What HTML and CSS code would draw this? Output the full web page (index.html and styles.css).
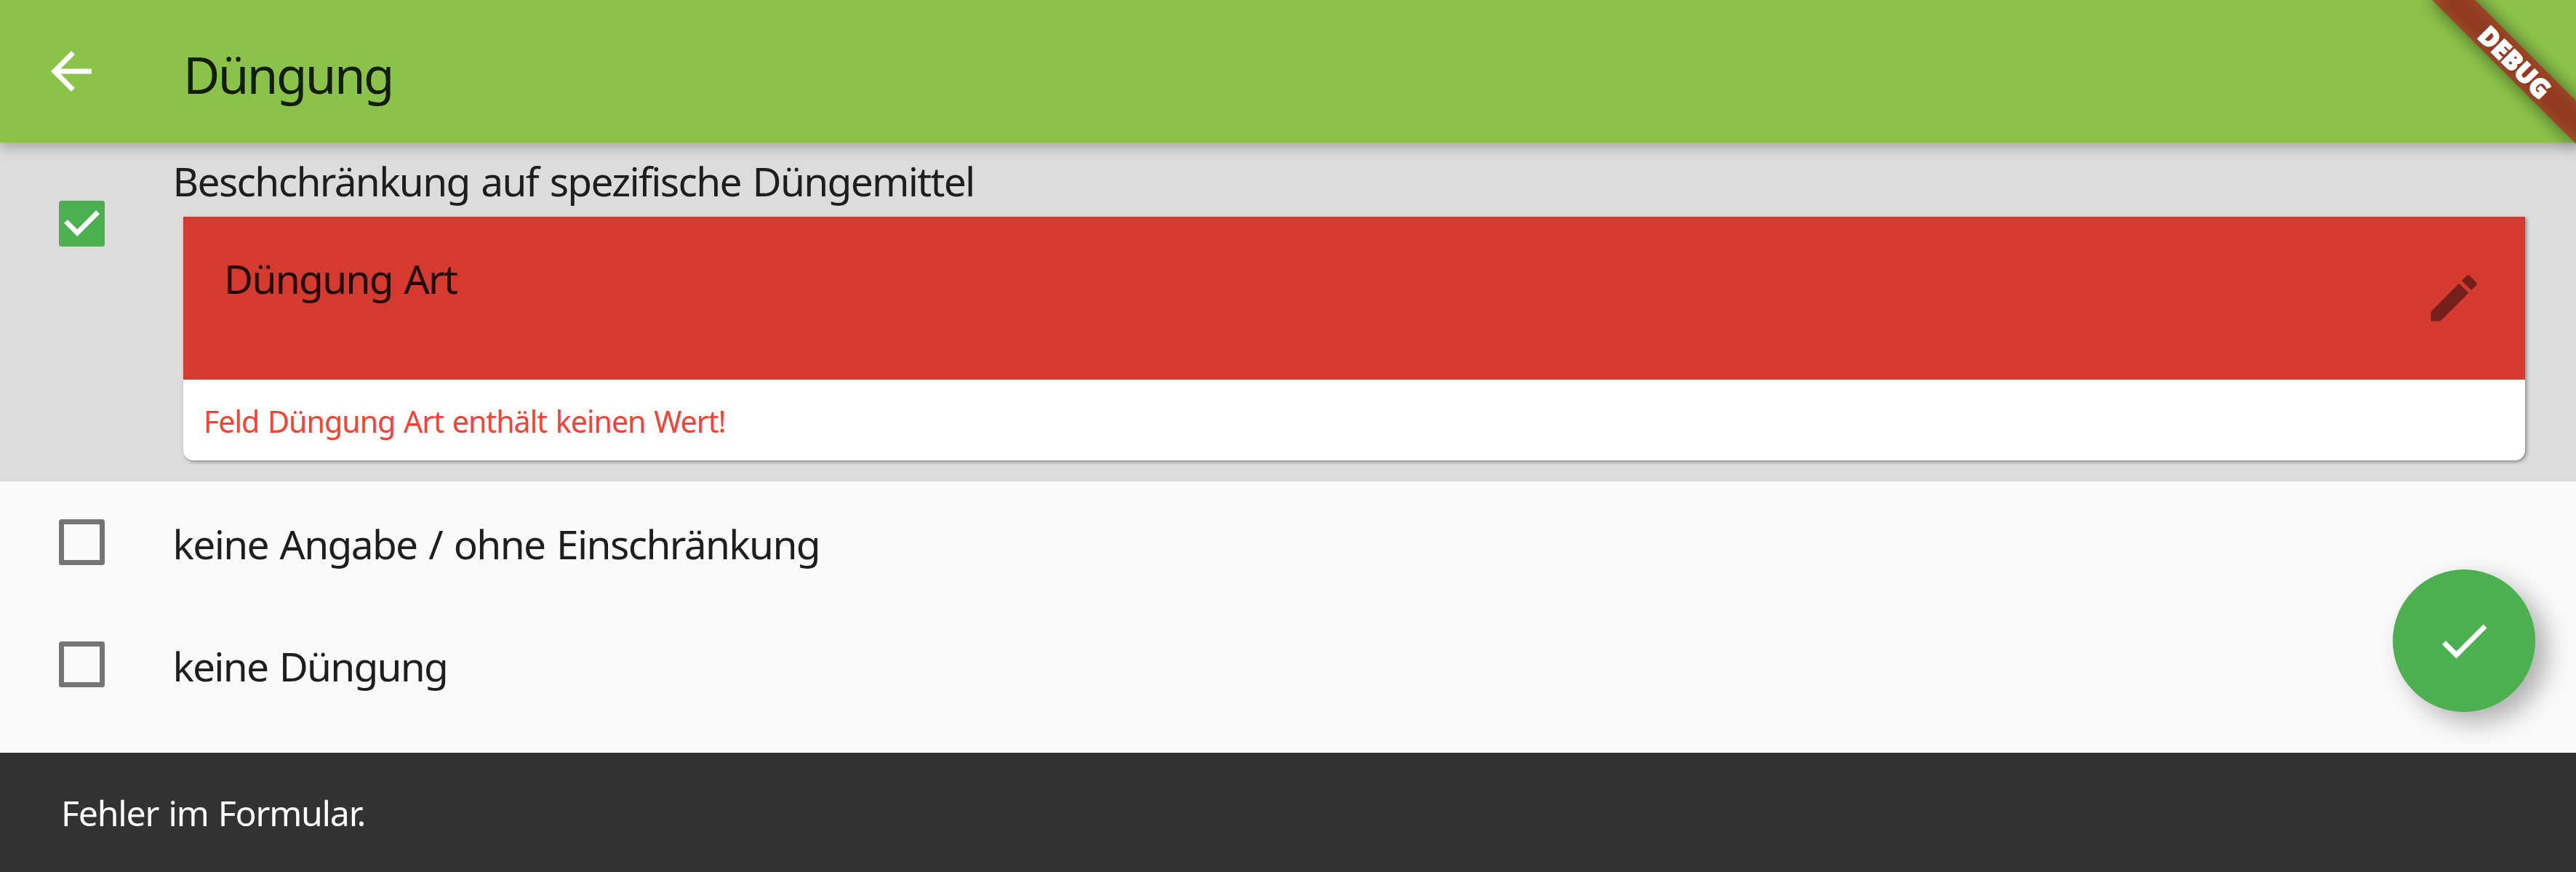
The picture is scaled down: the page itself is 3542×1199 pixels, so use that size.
FILE: index.html
```html
<!DOCTYPE html>
<html lang="de">
<head>
<meta charset="utf-8">
<title>Düngung</title>
<link rel="stylesheet" href="styles.css">
</head>
<body>
<div class="screen">
  <header class="app-bar">
    <svg class="icon back" viewBox="0 0 24 24"><path d="M20 11H7.83l5.59-5.59L12 4l-8 8 8 8 1.41-1.41L7.83 13H20v-2z"/></svg>
    <h1 class="title">Düngung</h1>
    <div class="banner"><span class="banner-text">DEBUG</span></div>
  </header>
  <main class="list">
    <section class="row row-selected">
      <svg class="checkbox checked" viewBox="0 0 18 18"><rect width="18" height="18" rx="1"/><path d="M2.7 8.1 7.2 12.6 15.3 4.5"/></svg>
      <div class="content">
        <div class="label label-restrict">Beschchränkung auf spezifische Düngemittel</div>
        <div class="card">
          <div class="card-head">
            <span class="label label-kind">Düngung Art</span>
            <svg class="icon edit" viewBox="0 0 24 24"><path d="M3 17.25V21h3.75L17.81 9.94l-3.75-3.75L3 17.25zM20.71 7.04c.39-.39.39-1.02 0-1.41l-2.34-2.34c-.39-.39-1.02-.39-1.41 0l-1.83 1.83 3.75 3.75 1.83-1.83z"/></svg>
          </div>
          <div class="card-error">Feld Düngung Art enthält keinen Wert!</div>
        </div>
      </div>
    </section>
    <section class="row">
      <span class="checkbox empty"></span>
      <span class="label label-any">keine Angabe / ohne Einschränkung</span>
    </section>
    <section class="row">
      <span class="checkbox empty"></span>
      <span class="label label-none">keine Düngung</span>
    </section>
    <button class="fab"><svg class="icon" viewBox="0 0 24 24"><path d="M9 16.17L4.83 12l-1.42 1.41L9 19 21 7l-1.41-1.41z"/></svg></button>
  </main>
  <footer class="snackbar">Fehler im Formular.</footer>
</div>
</body>
</html>
```
FILE: styles.css
```css
* { box-sizing: border-box; }

body {
  margin: 0;
  font-family: "Noto Sans", "Open Sans", sans-serif;
  color: #1e1e1e;
  background: #fafafa;
}

.screen {
  display: flex;
  flex-direction: column;
  height: 1199px;
  overflow: hidden;
}

.icon {
  width: 84px;
  height: 84px;
  flex: none;
  fill: currentColor;
}

/* App bar */
.app-bar {
  position: relative;
  z-index: 1;
  flex: none;
  display: flex;
  align-items: center;
  height: 196px;
  padding-left: 56px;
  background: #8bc34a;
  box-shadow: 0 6px 16px rgba(0, 0, 0, .26);
}

.back { color: #fff; }

.title {
  margin: 7px 0 0 112px;
  font-size: 69px;
  font-weight: 400;
  line-height: 94px;
  letter-spacing: -2.57px;
  color: #141c0a;
}

/* Diagonal corner ribbon */
.banner {
  position: absolute;
  top: 98px;
  right: -140px;
  width: 280px;
  height: 42px;
  transform-origin: 140px -98px;
  transform: rotate(45deg);
  display: flex;
  align-items: center;
  justify-content: center;
}

.banner::before,
.banner::after {
  content: "";
  position: absolute;
  inset: 0;
}

.banner::before {
  background: rgba(0, 0, 0, .5);
  filter: blur(13px);
}

.banner::after { background: rgba(183, 28, 28, .627); }

.banner-text {
  position: relative;
  z-index: 1;
  padding-left: 2px;
  font-size: 35.7px;
  font-weight: 900;
  line-height: 42px;
  color: #fff;
  -webkit-text-stroke: 1.4px #fff;
}

/* Options */
.list {
  position: relative;
  flex: none;
  height: 838.5px;
}

.row {
  display: flex;
  align-items: center;
  height: 168px;
  padding-left: 80.5px;
}

.row-selected {
  align-items: flex-start;
  height: 465.5px;
  background: #dcdcdc;
}

.checkbox {
  flex: none;
  width: 63px;
  height: 63px;
  margin-right: 94px;
}

.checked {
  margin-top: 80px;
  fill: #4caf50;
}

.checked path {
  fill: none;
  stroke: #fff;
  stroke-width: 2;
}

.empty {
  border: 7px solid #757575;
  border-radius: 3.5px;
}

.label {
  font-size: 55px;
  line-height: 74px;
  word-spacing: 3px;
  white-space: nowrap;
}

.label-restrict { letter-spacing: -1.67px; }
.label-kind { letter-spacing: -1.69px; }
.label-any { margin-top: 4px; letter-spacing: -1.63px; }
.label-none { margin-top: 4px; letter-spacing: -1.78px; }

.content {
  flex: 1;
  padding: 16px 70px 0 0;
}

/* Card holding the missing value and its message */
.card {
  height: 335.5px;
  margin: 11.5px 0 0 14.5px;
  background: #fff;
  border-radius: 0 0 14px 14px;
  box-shadow: 2px 2px 5px rgba(0, 0, 0, .38);
}

.card-head {
  display: flex;
  justify-content: space-between;
  align-items: flex-start;
  height: 224px;
  padding: 48px 56px 0;
  background: #d53a2f;
  color: #1f0604;
}

.edit {
  margin-top: 22px;
  color: #741f1b;
}

.card-error {
  padding: 29px 28px 0;
  font-size: 41.2px;
  line-height: 56px;
  letter-spacing: -1.04px;
  word-spacing: 2px;
  color: #f44336;
}

/* Floating confirm button */
.fab {
  position: absolute;
  right: 56px;
  bottom: 56px;
  display: flex;
  align-items: center;
  justify-content: center;
  width: 196px;
  height: 196px;
  padding: 0;
  border: 0;
  border-radius: 50%;
  background: #4caf50;
  color: #fff;
  box-shadow: 16px 14px 34px rgba(0, 0, 0, .3);
}

/* Snackbar */
.snackbar {
  position: relative;
  flex: 1;
  display: flex;
  align-items: center;
  padding-left: 84px;
  background: #323232;
  color: #fff;
  font-size: 48.2px;
  letter-spacing: -1.22px;
  word-spacing: 2px;
}
```
